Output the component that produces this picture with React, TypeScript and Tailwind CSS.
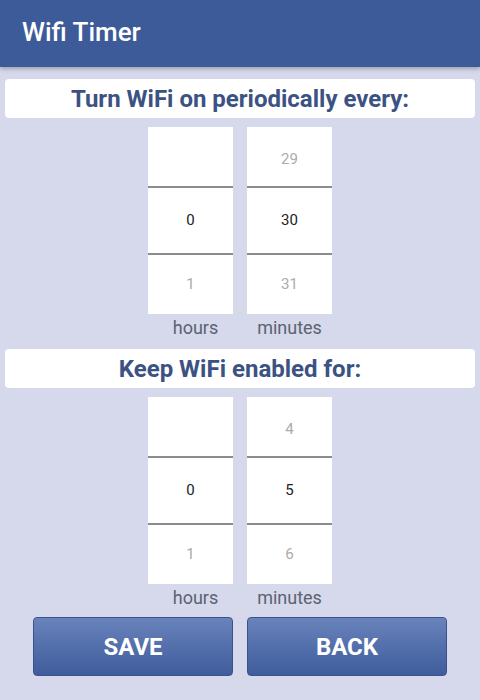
const Picker = ({ prev, value, next }: { prev: string; value: string; next: string }) => {
  return (
    <div className="flex w-[85px] flex-col bg-white text-[15px]">
      <div className="flex h-[59px] items-center justify-center pt-[5px] text-[#ababab]">{prev}</div>
      <div className="h-[2px] bg-[#8c8c8c]" />
      <div className="flex h-[65px] items-center justify-center text-[#222]">{value}</div>
      <div className="h-[2px] bg-[#8c8c8c]" />
      <div className="flex h-[59px] items-center justify-center text-[#ababab]">{next}</div>
    </div>
  )
}

const Section = ({
  title,
  minutes,
}: {
  title: string
  minutes: [string, string, string]
}) => {
  return (
    <div className="flex flex-col">
      <div className="mx-[5px] flex h-[39px] items-center justify-center rounded-[4px] bg-white text-[24px] font-bold text-[#3b5283]">
        {title}
      </div>
      <div className="mt-[9px] flex justify-center gap-[14px]">
        <div className="flex flex-col">
          <Picker prev="" value="0" next="1" />
          <div className="mt-[1px] h-[26px] pl-[10px] text-center text-[18px] leading-[26px] text-[#5c6272]">hours</div>
        </div>
        <div className="flex flex-col">
          <Picker prev={minutes[0]} value={minutes[1]} next={minutes[2]} />
          <div className="mt-[1px] h-[26px] text-center text-[18px] leading-[26px] text-[#5c6272]">minutes</div>
        </div>
      </div>
    </div>
  )
}

export default function App() {
  return (
    <div className="flex h-[700px] w-[480px] flex-col overflow-hidden bg-[#d5d9eb] font-['Roboto',sans-serif]">
      <div className="flex h-[67px] items-center bg-[#3d5a99] pb-[2px] pl-[22px] text-[26px] font-medium text-white shadow-[0_2px_4px_rgba(0,0,0,0.25)]">
        Wifi Timer
      </div>
      <div className="mt-[12px] flex flex-col gap-[8px]">
        <Section title="Turn WiFi on periodically every:" minutes={["29", "30", "31"]} />
        <Section title="Keep WiFi enabled for:" minutes={["4", "5", "6"]} />
      </div>
      <div className="mt-[6px] flex justify-center gap-[14px]">
        <button className="h-[59px] w-[200px] rounded-[4px] border border-[#3a5189] bg-gradient-to-b from-[#6983bb] to-[#3f5c9c] text-[24px] font-bold text-white">
          SAVE
        </button>
        <button className="h-[59px] w-[200px] rounded-[4px] border border-[#3a5189] bg-gradient-to-b from-[#6983bb] to-[#3f5c9c] text-[24px] font-bold text-white">
          BACK
        </button>
      </div>
    </div>
  )
}
